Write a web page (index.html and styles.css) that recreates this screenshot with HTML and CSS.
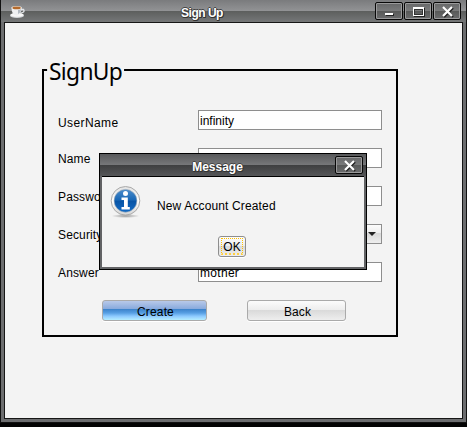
FILE: index.html
```html
<!DOCTYPE html>
<html lang="en">
<head>
<meta charset="utf-8">
<title>Sign Up</title>
<link rel="stylesheet" href="styles.css">
</head>
<body>
<main class="window">
  <header class="titlebar">
    <svg class="cup" width="18" height="14" viewBox="0 0 18 14">
      <ellipse cx="8" cy="10.5" rx="7" ry="2.6" fill="#d4d7da"/>
      <ellipse cx="8" cy="9.8" rx="6.5" ry="2" fill="#f7f7f7"/>
      <path d="M12 4.5h2.5q1.5 2-1 3l-2 .8" fill="none" stroke="#e1e4e7" stroke-width="1.3"/>
      <path d="M2.5 2.5Q2.5 10 7.5 10.4Q12.5 10 12.7 2.5Z" fill="#eff0f2"/>
      <path d="M9 5l3-1q0 4-3 5z" fill="#b3bac2"/>
      <ellipse cx="7.6" cy="2.8" rx="5.1" ry="1.9" fill="#f4f1ec"/>
      <ellipse cx="7.6" cy="2.9" rx="4.2" ry="1.3" fill="#b46a2b"/>
    </svg>
    <h1 class="caption">Sign Up</h1>
    <div class="controls">
      <button class="control" aria-label="Minimize"><svg width="26" height="16" viewBox="0 0 26 16" shape-rendering="crispEdges"><path d="M10 11h8v2h-8z" fill="#222"/><path d="M9 10h8v2H9z" fill="#fff"/></svg></button>
      <button class="control" aria-label="Maximize"><svg width="26" height="16" viewBox="0 0 26 16" shape-rendering="crispEdges"><path d="M9.5 5.5h10v8h-10z" fill="none" stroke="#222"/><path d="M8 4h11v9H8zM9 6v6h9V6z" fill="#fff" fill-rule="evenodd"/><path d="M9.5 6.5h8v5h-8z" fill="none" stroke="#333"/></svg></button>
      <button class="control" aria-label="Close"><svg width="26" height="16" viewBox="0 0 26 16"><path d="M10 5l9 9m0-9l-9 9" stroke="#222" stroke-width="2.2"/><path d="M9 4l9 9m0-9l-9 9" stroke="#fff" stroke-width="2.2"/></svg></button>
    </div>
  </header>
  <section class="content">
    <form class="group">
      <h2 class="legend"><span>SignUp</span></h2>
      <div class="row first"><label>UserName</label><div class="field">infinity</div></div>
      <div class="row"><label>Name</label><div class="field"></div></div>
      <div class="row"><label>Password</label><div class="field"></div></div>
      <div class="row"><label>Security Question</label><div class="field combo"><span class="drop"></span></div></div>
      <div class="row"><label>Answer</label><div class="field answer">mother</div></div>
      <div class="actions">
        <button type="button" class="button create">Create</button>
        <button type="button" class="button back">Back</button>
      </div>
    </form>
  </section>
</main>
<section class="dialog" role="dialog">
  <header class="dialog-title">
    <h2 class="caption">Message</h2>
    <button class="control" aria-label="Close"><svg width="26" height="16" viewBox="0 0 26 16"><path d="M10 5l9 9m0-9l-9 9" stroke="#222" stroke-width="2.2"/><path d="M9 4l9 9m0-9l-9 9" stroke="#fff" stroke-width="2.2"/></svg></button>
  </header>
  <div class="dialog-body">
    <div class="message">
      <svg class="info" width="32" height="34" viewBox="0 0 32 34">
        <defs>
          <linearGradient id="rim" x2="0" y2="1"><stop stop-color="#e2e2e2"/><stop offset=".5" stop-color="#fff"/><stop offset="1" stop-color="#d4d4d4"/></linearGradient>
          <linearGradient id="blue" x2="0" y2="1"><stop stop-color="#4b8ccb"/><stop offset=".48" stop-color="#1766b5"/><stop offset=".5" stop-color="#0753a5"/><stop offset="1" stop-color="#126ac4"/></linearGradient>
          <radialGradient id="shade"><stop stop-color="#999"/><stop offset="1" stop-color="#999" stop-opacity="0"/></radialGradient>
        </defs>
        <ellipse cx="15.500" cy="30" rx="14" ry="2" fill="url(#shade)"/>
        <circle cx="15.500" cy="14.800" r="14.300" fill="url(#rim)" stroke="#aaa"/>
        <circle cx="15.500" cy="14.800" r="11.400" fill="url(#blue)" stroke="#9eabb8" stroke-width=".6"/>
        <circle cx="15.500" cy="7.500" r="2.500" fill="#fff"/>
        <path d="M11.500 11.500h6.300v9.500h2v2.500h-8.300V21h2.500v-7h-2.500z" fill="#fff"/>
      </svg>
      <p>New Account Created</p>
    </div>
    <button class="button ok"><span class="focus">OK</span></button>
  </div>
</section>
</body>
</html>
```
FILE: styles.css
```css
* { box-sizing: border-box; }

body {
  margin: 0;
  width: 467px;
  height: 427px;
  overflow: hidden;
  background: #030303;
  font: 12px/14px "Liberation Sans", Arial, sans-serif;
  letter-spacing: 0.14px;
  color: #000;
}

h1, h2, p { margin: 0; font-size: inherit; font-weight: normal; }
button { padding: 0; font: inherit; letter-spacing: inherit; color: inherit; }
svg { display: block; }

.window {
  width: 467px;
  height: 423px;
  padding: 0 3px 3px;
  border: solid #111;
  border-width: 0 1px 1px;
  background: #6c6d6f;
}

.titlebar {
  display: grid;
  grid-template-columns: 20px 1fr 86px;
  height: 22px;
  margin: 0 -3px;
  padding: 2px 5px 0 8px;
  background: linear-gradient(#7a7b7d, #929395 11px, #5c5e5d 11px, #757778);
}

.cup { margin-top: 3px; }

.caption {
  text-align: center;
  font-weight: bold;
  line-height: 22px;
  letter-spacing: 0;
  color: #fff;
  text-shadow: 1px 1px #333, -1px 0 #444, 0 -1px #444, 1px 0 #444, 0 1px #333;
}

.titlebar .caption { letter-spacing: -0.5px; }
.controls { display: flex; gap: 1px; }

.control {
  flex: none;
  width: 28px;
  height: 18px;
  border: 1px solid #080808;
  border-radius: 2px;
  background: linear-gradient(#656667, #7a7b7c 8px, #585958 8px, #6c6d6e);
  box-shadow: inset 0 0 0 1px #9a9a9b;
}

.content {
  height: 397px;
  padding: 46px 0 0 37px;
  border: 1px solid #161616;
  background: #f3f3f3;
}

.group {
  width: 356px;
  height: 268px;
  border: 2px solid #000;
}

.legend {
  width: 77px;
  height: 39px;
  margin-left: 3px;
  padding-left: 2px;
}

.legend span {
  display: block;
  width: 79px;
  height: 28px;
  transform: translateY(-15px) scaleX(0.95);
  transform-origin: left;
  font: 24px/29px "Noto Sans", Tahoma, sans-serif;
  letter-spacing: -0.7px;
  background: #f3f3f3;
  box-shadow: -2px 0 #f3f3f3;
}

.row {
  display: grid;
  grid-template-columns: 140px 184px;
  height: 38px;
  padding-left: 14px;
}

.row label { padding-top: 4px; white-space: nowrap; }
.first label { padding-top: 6px; letter-spacing: 0.4px; }

.field {
  position: relative;
  height: 20px;
  padding: 3px 1px;
  border: 1px solid #8e8e8e;
  background: #fff;
  letter-spacing: 0;
}

.answer { letter-spacing: 0.3px; }

.combo, .back, .ok {
  background: linear-gradient(#fcfcfc, #ededed 47%, #d9d9d9 47%, #eee);
}

.drop {
  position: absolute;
  right: 5px;
  top: 7px;
  border: solid transparent;
  border-width: 4px 4px 0;
  border-top-color: #222;
}

.actions { display: flex; gap: 40px; padding-left: 58px; }

.button {
  height: 21px;
  border: 1px solid #aaa;
  border-radius: 3px;
  box-shadow: 0 1px #fff;
}

.create, .back { padding: 2px 0 0 2px; }

.create {
  width: 105px;
  background: linear-gradient(#b8c9e9, #87a9dc 43%, #3d84cc 44%, #579fe3 63%, #8dcaff 80%, #b5edff);
}

.back { width: 99px; }

.dialog {
  position: absolute;
  left: 99px;
  top: 153px;
  width: 268px;
  height: 117px;
  padding: 0 2px 2px;
  border: 1px solid #000;
  background: #626365;
}

.dialog-title {
  display: grid;
  grid-template-columns: 1fr 28px;
  height: 22px;
  margin: 0 -2px;
  padding: 2px 3px 0 0;
  background: linear-gradient(#58595b, #77787a 11px, #3e3f40 11px, #555658);
}

.dialog-body {
  height: 91px;
  border-top: 1px solid #000;
  background: #f3f3f3;
}

.message { display: flex; height: 59px; padding: 9px 0 0 8px; }
.message p { padding: 13px 0 0 15px; }

.ok {
  display: block;
  width: 28px;
  margin-left: 116px;
  padding: 0 2px;
  border-color: #8e8e8e;
}

.focus {
  display: block;
  width: 22px;
  height: 17px;
  border: 1px dotted #ffc000;
  border-bottom: 2px dotted #ffd040;
  line-height: 16px;
  letter-spacing: 0;
}
```
